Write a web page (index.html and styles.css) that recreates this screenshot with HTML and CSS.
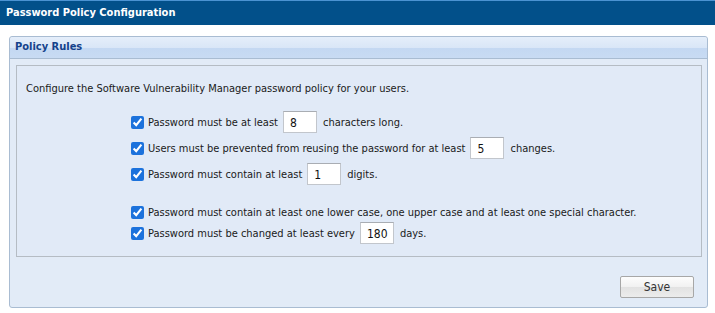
FILE: index.html
```html
<!doctype html>
<html>

<head>
  <title>Password Policy Configuration</title>
  <link rel="stylesheet" href="styles.css">
</head>

<body>
  <div class="title-bar">Password Policy Configuration</div>

  <div class="page">
    <div class="panel">
      <div class="panel-head">Policy Rules</div>
      <div class="panel-body">
        <div class="rules-box">
          <p class="intro">Configure the Software Vulnerability Manager password policy for your users.</p>
          <div class="rules">
            <label class="rule">
              <input type="checkbox" checked>
              <span>Password must be at least</span>
              <input type="text" class="num" value="8">
              <span>characters long.</span>
            </label>
            <label class="rule">
              <input type="checkbox" checked>
              <span>Users must be prevented from reusing the password for at least</span>
              <input type="text" class="num" value="5">
              <span>changes.</span>
            </label>
            <label class="rule">
              <input type="checkbox" checked>
              <span>Password must contain at least</span>
              <input type="text" class="num" value="1">
              <span>digits.</span>
            </label>
            <label class="rule rule-plain">
              <input type="checkbox" checked>
              <span>Password must contain at least one lower case, one upper case and at least one special character.</span>
            </label>
            <label class="rule">
              <input type="checkbox" checked>
              <span>Password must be changed at least every</span>
              <input type="text" class="num" value="180">
              <span>days.</span>
            </label>
          </div>
        </div>
        <div class="actions">
          <button type="button" class="save-button">Save</button>
        </div>
      </div>
    </div>
  </div>
</body>

</html>
```

FILE: styles.css
```css
body {
  margin: 0;
  background-color: #fff;
  font-family: "DejaVu Sans Condensed", "DejaVu Sans", sans-serif;
  font-size: 11px;
  color: #1a1a1a;
}

/* top header */
.title-bar {
  height: 24px;
  line-height: 24px;
  padding-left: 6px;
  background-color: #02508a;
  border-top: 1px solid #4b93d2;
  color: #fff;
  font-weight: bold;
  font-size: 11px;
}

.page {
  padding: 11px 7px 0 9px;
}

/* Policy Rules panel */
.panel {
  border: 1px solid #a9bcd2;
  border-radius: 3px;
  background-color: #e2ebf7;
}

.panel-head {
  height: 21px;
  line-height: 20px;
  padding-left: 5px;
  background: linear-gradient(#e5eefa 0, #d9e6f7 52%, #c4d8f2 54%, #c8dbf3 100%);
  border-bottom: 1px solid #a9bcd2;
  border-radius: 3px 3px 0 0;
  color: #15428b;
  font-weight: bold;
  font-size: 11px;
}

.panel-body {
  padding: 6px 5px 9px 6px;
}

.rules-box {
  border: 1px solid #b5bcc4;
  background-color: #e1eaf7;
  padding: 0 9px 12px 9px;
}

.intro {
  margin: 0;
  padding-top: 16px;
  height: 29px;
  line-height: 14px;
}

.rules {
  margin-left: 105px;
  display: flex;
  flex-direction: column;
  gap: 4px;
}

.rule {
  display: flex;
  align-items: center;
  height: 22px;
}

.rule-plain {
  height: 18px;
  margin-top: 14px;
  margin-bottom: -3px;
}

.rule input[type="checkbox"] {
  width: 13px;
  height: 13px;
  margin: 0 4px 0 0;
  accent-color: #1c72dc;
}

.num {
  box-sizing: border-box;
  width: 34px;
  height: 22px;
  margin: 0 6px 0 5px;
  padding: 2px 0 0 6px;
  border: 1px solid #c2c6cc;
  border-top-color: #a9adb3;
  background-color: #fff;
  font-family: inherit;
  font-size: 12px;
  color: #111;
  outline: none;
}

/* Save button */
.actions {
  display: flex;
  justify-content: flex-end;
  padding: 19px 8px 0 0;
}

.save-button {
  width: 74px;
  height: 22px;
  padding: 0;
  border: 1px solid #a7a7a7;
  border-radius: 2px;
  background: linear-gradient(#fdfdfd 0, #f1f1f1 50%, #e2e2e2 51%, #ececec 100%);
  font-family: inherit;
  font-size: 12px;
  color: #333;
}
```
